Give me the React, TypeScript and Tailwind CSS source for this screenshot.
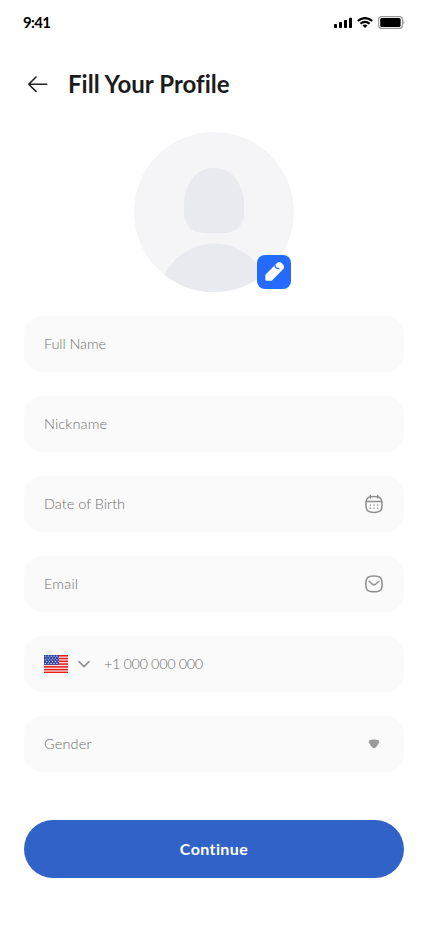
import type { ReactNode } from "react";

function StatusBar() {
  return (
    <div className="flex h-11 items-center justify-between pl-[23px] pr-[23px]">
      <span className="text-[15px] font-bold leading-5 tracking-[-0.7px] text-black">9:41</span>
      <div className="flex items-center gap-[5px]">
        <svg width="18" height="11" viewBox="0 0 18 11" fill="black">
          <rect x="0" y="7" width="3" height="4" rx="0.7" />
          <rect x="5" y="5" width="3" height="6" rx="0.7" />
          <rect x="10" y="3" width="3" height="8" rx="0.7" />
          <rect x="15" y="0.8" width="3" height="10.2" rx="0.7" />
        </svg>
        <svg width="16" height="11" viewBox="0 0 16 11" fill="none" stroke="black">
          <path d="M.8 4C4.8.1 11.2.1 15.2 4" strokeWidth="2.2" />
          <path d="M3.4 6.7c2.6-2.5 6.6-2.5 9.2 0" strokeWidth="2.1" />
          <path d="M8 11 5.5 8.5c1.4-1.3 3.6-1.3 5 0z" fill="black" stroke="none" />
        </svg>
        <svg width="27" height="13" viewBox="0 0 27 13">
          <rect x="0.6" y="0.6" width="23.8" height="11.8" rx="3" fill="none" stroke="#999" strokeWidth="1.1" />
          <rect x="2.2" y="2.1" width="20.4" height="8.8" rx="1.5" fill="black" />
          <path d="M25.4 4.6v3.8c1.4-.6 1.4-3.2 0-3.8z" fill="#999" />
        </svg>
      </div>
    </div>
  );
}

function Avatar() {
  return (
    <div className="relative mx-auto mt-6 size-40 shrink-0">
      <svg width="160" height="160" viewBox="0 0 160 160">
        <defs>
          <clipPath id="avatar">
            <circle cx="80" cy="80" r="80" />
          </clipPath>
        </defs>
        <circle cx="80" cy="80" r="80" fill="#f5f5f8" />
        <path
          d="M80 35.7C98.5 35.7 110.2 52 110.2 77C110.2 94 103 101.3 86 101.3H74C57 101.3 49.8 94 49.8 77C49.8 52 61.5 35.7 80 35.7Z"
          fill="#e9e9f0"
        />
        <circle cx="80" cy="166" r="54.5" fill="#e9e9f0" clipPath="url(#avatar)" />
      </svg>
      <button className="absolute left-[123px] top-[123px] flex size-[34px] items-center justify-center rounded-lg bg-[#246bfd]">
        <svg width="34" height="34" viewBox="0 0 34 34" fill="white">
          <path d="M8.8 19.3 20.1 8Q22.2 6.2 24.4 7.9L26.3 9.8Q28 12 26.3 14.1L15.2 25.2Q14.6 25.8 13.6 25.8H9.6Q8.4 25.8 8.4 24.7V20.3Q8.4 19.7 8.8 19.3Z" />
          <path
            d="M17.9 10.3C18.1 12.4 19.6 13.6 21.9 13.7"
            fill="none"
            stroke="#246bfd"
            strokeWidth="1.3"
            strokeLinecap="round"
          />
        </svg>
      </button>
    </div>
  );
}

function Field({ children, icon }: { children: ReactNode; icon?: ReactNode }) {
  return (
    <div className="flex h-14 items-center justify-between rounded-[18px] bg-[#fafafa] px-5 text-[14.5px] font-light leading-5 text-[#707070]">
      {children}
      {icon}
    </div>
  );
}

function CalendarIcon() {
  return (
    <svg width="20" height="20" viewBox="0 0 20 20" fill="none" stroke="#8f8f8f" strokeWidth="1.5" strokeLinecap="round">
      <path d="M10 2.6C16.4 2.6 18 4.2 18 10.5S16.4 18.4 10 18.4 2 16.8 2 10.5 3.6 2.6 10 2.6Z" />
      <path d="M2.3 7.5h15.4M6.3 1.4v2.6M13.7 1.4v2.6" />
      <path d="M6.4 11h.02M10 11h.02M13.6 11h.02M6.4 14.2h.02M10 14.2h.02M13.6 14.2h.02" />
    </svg>
  );
}

function MailIcon() {
  return (
    <svg width="20" height="20" viewBox="0 0 20 20" fill="none" stroke="#8f8f8f" strokeWidth="1.5" strokeLinecap="round" strokeLinejoin="round">
      <path d="M10 2C16.3 2 18.2 3.8 18.2 10S16.3 17.8 10 17.8 1.8 16.2 1.8 10 3.7 2 10 2Z" />
      <path d="M5.2 7.3 8.4 10.2Q10 11.5 11.6 10.2L14.8 7.3" />
    </svg>
  );
}

const STRIPES = [0, 1, 2, 3, 4, 5, 6];
const STAR_ROWS = [0, 1, 2, 3, 4];
const STAR_COLUMNS = [0, 1, 2, 3, 4];

function Flag() {
  return (
    <svg width="24" height="18" viewBox="0 0 24 18">
      <rect width="24" height="18" fill="#f7e8e8" />
      {STRIPES.map((n) => (
        <rect key={n} y={(n * 36) / 13} width="24" height={18 / 13 + 0.15} fill="#e31d1c" />
      ))}
      <rect width="15" height="9.7" fill="#2e42a5" />
      {STAR_ROWS.map((row) =>
        STAR_COLUMNS.map((col) => (
          <circle key={`${row}-${col}`} cx={1.3 + col * 2.9 + (row % 2) * 1.4} cy={1.2 + row * 1.8} r="0.6" fill="#f7fcff" />
        )),
      )}
    </svg>
  );
}

export default function App() {
  return (
    <main className="flex h-[926px] w-[428px] flex-col bg-white font-['Lato',sans-serif]">
      <StatusBar />
      <header className="mt-4 flex h-12 items-center pl-6">
        <svg width="28" height="28" viewBox="0 0 28 28" fill="none" stroke="#212121" strokeWidth="1.6" strokeLinecap="round" strokeLinejoin="round">
          <path d="M22.8 14.2H4.7M12 7 4.7 14.2l7.3 7.2" />
        </svg>
        <h1 className="ml-4 text-2xl font-bold leading-7 tracking-[0.03px] text-[#1c1c1c]">Fill Your Profile</h1>
      </header>
      <Avatar />
      <form className="mx-6 mt-6 flex flex-col gap-6">
        <Field>
          <span className="tracking-[-0.1px]">Full Name</span>
        </Field>
        <Field>
          <span className="tracking-[0.15px]">Nickname</span>
        </Field>
        <Field icon={<CalendarIcon />}>
          <span>Date of Birth</span>
        </Field>
        <Field icon={<MailIcon />}>
          <span className="tracking-[0.2px]">Email</span>
        </Field>
        <Field>
          <div className="flex items-center">
            <Flag />
            <svg className="ml-2 mr-3" width="16" height="16" viewBox="0 0 16 16" fill="none" stroke="#8f8f8f" strokeWidth="1.5" strokeLinecap="round" strokeLinejoin="round">
              <path d="m3 5.6 5 5 5-5" />
            </svg>
            <span className="tracking-[-0.4px]">+1 000 000 000</span>
          </div>
        </Field>
        <Field
          icon={
            <svg width="20" height="20" viewBox="0 0 20 20" fill="#9a9a9a">
              <path d="M6 5.9Q10 5.2 14 5.9 15.8 6.2 15.1 8.3 14.2 11 11.7 13.4 10 15 8.3 13.4 5.8 11 4.9 8.3 4.2 6.2 6 5.9Z" />
            </svg>
          }
        >
          <span className="tracking-[0.15px]">Gender</span>
        </Field>
      </form>
      <button className="mx-6 mt-12 flex h-[58px] shrink-0 items-center justify-center rounded-full bg-[#3062c8] text-base font-bold tracking-[0.4px] text-white">
        Continue
      </button>
    </main>
  );
}
